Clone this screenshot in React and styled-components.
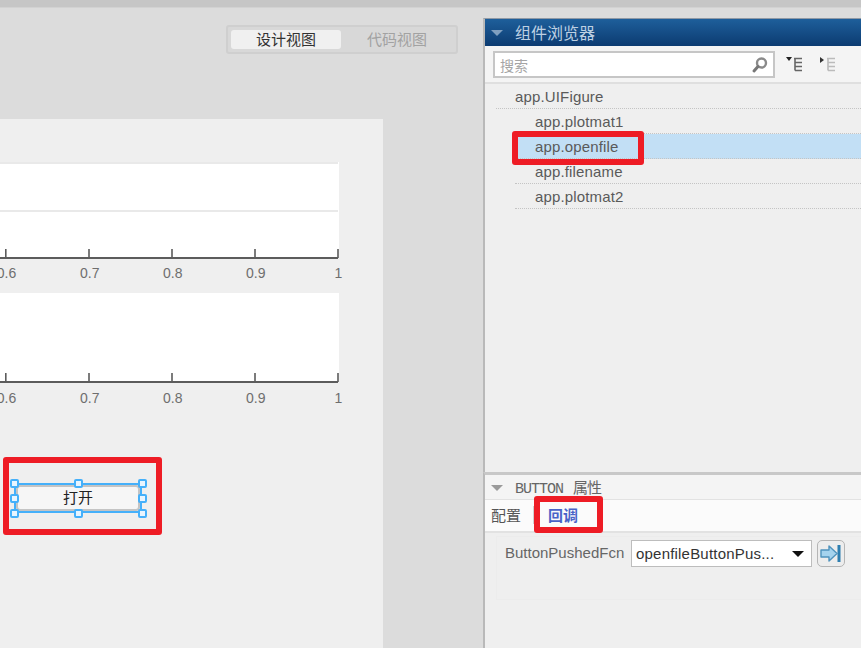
import React from 'react';
import styled, { createGlobalStyle } from 'styled-components';

const Global = createGlobalStyle`
  html, body { margin: 0; padding: 0; background: #dcdcdc; }
  body { width: 861px; height: 648px; overflow: hidden; font-family: "Liberation Sans", Arial, "Noto Sans CJK SC", sans-serif; }
  * { box-sizing: border-box; }
`;

const cjk = `"Noto Sans CJK SC", "Liberation Sans", sans-serif`;

const Page = styled.div`
  position: relative; width: 861px; height: 648px; display: flex; flex-direction: column; overflow: hidden; background: #dcdcdc;
`;
const TopBar = styled.div`height: 8px; flex: none; background: #c6c6c6; border-bottom: 1px solid #d2d2d2;`;
const Body = styled.div`flex: 1; display: flex; min-height: 0;`;

const Designer = styled.main`width: 483px; flex: none; display: flex; flex-direction: column;`;
const ToggleRow = styled.div`display: flex; justify-content: flex-end; padding: 17px 25px 0 0;`;
const Toggle = styled.div`
  width: 232px; height: 29px; display: flex; align-items: stretch; padding: 3px 3px;
  background: #d8d8d8; border: 2px solid #cfcfcf; border-radius: 3px;
`;
const ToggleItem = styled.div`
  flex: 0 0 ${p => (p.$active ? 110 : 112)}px; display: flex; align-items: center; justify-content: center;
  padding-bottom: 2px; font: 15px ${cjk}; border-radius: 3px;
  color: ${p => (p.$active ? '#333' : '#a2a2a2')};
  background: ${p => (p.$active ? '#f0f0f0' : 'transparent')};
`;
const Figure = styled.section`
  position: relative; width: 383px; flex: 1; margin-top: 65px; padding-top: 43px; background: #efefef;
`;
const AxesSvg = styled.svg`display: block; width: 350px; overflow: visible;`;
const TickLabel = styled.text`font: 14px "Liberation Sans", Arial, sans-serif; fill: #6e6e6e; text-anchor: middle;`;
const FirstAxes = styled.div`height: 131px;`;
const SecondAxes = styled.div`height: 125px;`;
const ButtonSlot = styled.div`position: relative; width: 128px; height: 30px; margin: 65px 0 0 14px; display: flex; padding: 2px 0;`;
const Selection = styled.div`position: absolute; inset: 0; border: 2px solid #45b0fa;`;
const DesignButton = styled.button`
  flex: 1; margin: 0 2px; padding: 0 0 3px; border: 2px solid #c4c4c4; border-radius: 4px; background: #f6f6f6;
  color: #222; font: 15px ${cjk}; line-height: 1;
`;
const Handle = styled.span`
  position: absolute; width: 9px; height: 9px; border: 2px solid #45b0fa; border-radius: 2px; background: #e8f5ff;
  left: ${p => p.$x - 4}px; top: ${p => p.$y - 4}px;
`;

const Side = styled.aside`flex: 1; display: flex; flex-direction: column; min-width: 0; padding-top: 10px;`;
const Browser = styled.section`
  flex: 0 0 454px; display: flex; flex-direction: column; border-left: 2px solid #b9b9b9; border-top: 1px solid #8f99a5; background: #efefef;
`;
const BlueHeader = styled.header`
  height: 27px; flex: none; display: flex; align-items: center; gap: 12px; padding: 0 0 2px 6px; color: #bdd0e3;
  background: linear-gradient(#1e5f9b, #0c3b71); font: 16px ${cjk};
`;
const Caret = styled.span`
  width: 0; height: 0; border-left: 6px solid transparent; border-right: 6px solid transparent;
  border-top: 6px solid ${p => p.$color}; flex: none; margin-top: 2px;
`;
const SearchRow = styled.div`
  height: 38px; flex: none; display: flex; align-items: center; padding: 0 0 0 8px; background: #f4f4f4; border-bottom: 2px solid #dfdfdf;
`;
const SearchBox = styled.div`
  width: 282px; height: 27px; display: flex; align-items: center; justify-content: space-between; padding: 1px 3px 0 5px;
  background: #fff; border: 2px solid #c6c6c6; color: #a5a5a5; font: 14px ${cjk};
`;
const ToolIcon = styled.svg`width: 20px; height: 16px; flex: none; margin-left: ${p => p.$gap}px;`;
const Tree = styled.ul`list-style: none; margin: 0; padding: 0; flex: 1; background: #efefef;`;
const TreeRow = styled.li`
  height: 25px; display: flex; align-items: center; font-size: 15px; letter-spacing: 0.15px; color: #5a5a5a;
  margin-left: ${p => (p.$root ? 11 : 30)}px;
  padding-left: ${p => (p.$root ? 19 : 20)}px;
  border-bottom: 1px dotted #c4c4c4;
  background: ${p => (p.$selected ? '#c2dff5' : 'transparent')};
`;

const Props = styled.section`
  flex: 1; display: flex; flex-direction: column; border-left: 2px solid #b9b9b9; border-top: 3px solid #c8c8c8; background: #efefef;
`;
const PropsHeader = styled.header`
  height: 25px; flex: none; display: flex; align-items: center; gap: 12px; padding: 0 0 1px 6px; background: #f4f4f4;
  border-bottom: 1px solid #e2e2e2; color: #666; font: 15px "Liberation Mono", ${cjk}; letter-spacing: -1px; word-spacing: 2px;
`;
const Tabs = styled.div`
  height: 33px; flex: none; display: flex; align-items: center; padding: 0 0 2px 6px; background: #fbfbfb; border-bottom: 2px solid #e2e2e2;
`;
const Tab = styled.div`
  font: ${p => (p.$active ? 700 : 400)} 15px ${cjk}; color: ${p => (p.$active ? '#4a63c8' : '#555')};
  padding: ${p => (p.$active ? '0 0 0 14px' : '0 12px 0 0')};
  ${p => (p.$active ? '' : 'border-right: 1px solid #d0d0d0; line-height: 18px;')}
`;
const CallbackArea = styled.div`
  margin: 3px 0 0 11px; height: 64px; padding: 3px 0 0 8px; display: flex; align-items: flex-start;
  border: 1px solid #ececec; border-right: none;
`;
const FieldLabel = styled.label`font-size: 15px; color: #666; width: 126px; flex: none; line-height: 26px;`;
const Select = styled.div`
  width: 181px; height: 27px; flex: none; display: flex; align-items: center; justify-content: space-between;
  padding: 0 7px 0 4px; background: #fff; border: 1px solid #bdbdbd; color: #333; font-size: 15px; letter-spacing: 0.2px;
`;
const SelectCaret = styled.span`width: 0; height: 0; border-left: 6px solid transparent; border-right: 6px solid transparent; border-top: 6px solid #111;`;
const JumpButton = styled.button`
  width: 28px; height: 27px; flex: none; margin-left: 5px; padding: 0; display: flex; align-items: center; justify-content: center;
  background: #ededed; border: 1px solid #b5b5b5; border-radius: 5px;
`;

const Annotation = styled.div`
  position: absolute; left: ${p => p.$x}px; top: ${p => p.$y}px; width: ${p => p.$w}px; height: ${p => p.$h}px;
  border: ${p => p.$t}px solid #ee1c25; border-radius: 3px; pointer-events: none;
`;

const ticks = [5.5, 88.7, 171.7, 254.7, 337.7];
const labels = ['0.6', '0.7', '0.8', '0.9', '1'];

function Axes({ height, plotTop, grid, labelGap }) {
  const axisY = height;
  return (
    <AxesSvg height={height + 28} viewBox={`0 0 350 ${height + 28}`}>
      <rect x="0" y={plotTop} width="339" height={height - plotTop} fill="#fff" />
      {grid.map(y => <rect key={y} x="0" y={y} width="338" height="2" fill="#e9e9e9" />)}
      <rect x="0" y={axisY - 1} width="338" height="2" fill="#5c5c5c" />
      {ticks.map(x => <rect key={x} x={x - 0.5} y={axisY - 9} width="1.6" height="9" fill="#5c5c5c" />)}
      {labels.map((t, i) => <TickLabel key={t} x={ticks[i] + (i === 4 ? 0.8 : 1)} y={axisY + labelGap}>{t}</TickLabel>)}
    </AxesSvg>
  );
}

const handles = [[0, 0], [64, 0], [128, 0], [0, 15], [128, 15], [0, 30], [64, 30], [128, 30]];

export default function App() {
  return (
    <Page>
      <Global />
      <TopBar />
      <Body>
        <Designer>
          <ToggleRow>
            <Toggle>
              <ToggleItem $active>设计视图</ToggleItem>
              <ToggleItem>代码视图</ToggleItem>
            </Toggle>
          </ToggleRow>
          <Figure>
            <FirstAxes><Axes height={96} plotTop={0} grid={[0, 48]} labelGap={20} /></FirstAxes>
            <SecondAxes><Axes height={89} plotTop={0} grid={[]} labelGap={21} /></SecondAxes>
            <ButtonSlot>
              <Selection />
              <DesignButton>打开</DesignButton>
              {handles.map(([x, y]) => <Handle key={`${x}-${y}`} $x={x} $y={y} />)}
            </ButtonSlot>
          </Figure>
        </Designer>
        <Side>
          <Browser>
            <BlueHeader><Caret $color="#7f9fc0" />组件浏览器</BlueHeader>
            <SearchRow>
              <SearchBox>
                搜索
                <svg width="20" height="20" viewBox="0 0 20 20">
                  <circle cx="11.5" cy="8" r="4.5" fill="#fff" stroke="#8a8a8a" strokeWidth="2.4" />
                  <path d="M8 11.5 L4 16" stroke="#777" strokeWidth="3" strokeLinecap="round" />
                </svg>
              </SearchBox>
              <ToolIcon $gap={10} viewBox="0 0 20 16">
                <path d="M1 1 h6 l-3 4z" fill="#222" />
                <path d="M9 2.5 h8 M10 2.5 v12 M10 6.5 h7 M10 10.5 h7 M10 14.5 h7" stroke="#666" strokeWidth="1.6" fill="none" />
              </ToolIcon>
              <ToolIcon $gap={13} viewBox="0 0 20 16">
                <path d="M2 1 l4 3 l-4 3z" fill="#333" />
                <path d="M9 2.5 h8 M10 2.5 v12 M10 6.5 h7 M10 10.5 h7 M10 14.5 h7" stroke="#bbb" strokeWidth="1.6" fill="none" />
              </ToolIcon>
            </SearchRow>
            <Tree>
              <TreeRow $root>app.UIFigure</TreeRow>
              <TreeRow>app.plotmat1</TreeRow>
              <TreeRow $selected>app.openfile</TreeRow>
              <TreeRow>app.filename</TreeRow>
              <TreeRow>app.plotmat2</TreeRow>
            </Tree>
          </Browser>
          <Props>
            <PropsHeader><Caret $color="#9a9a9a" /><span>BUTTON 属性</span></PropsHeader>
            <Tabs>
              <Tab>配置</Tab>
              <Tab $active>回调</Tab>
            </Tabs>
            <CallbackArea>
              <FieldLabel>ButtonPushedFcn</FieldLabel>
              <Select>openfileButtonPus...<SelectCaret /></Select>
              <JumpButton aria-label="go">
                <svg width="22" height="19" viewBox="0 0 22 19">
                  <path d="M1 6 h8 V2 l8 7.5 l-8 7.5 v-4 H1z" fill="#a5d3ee" stroke="#4f93bd" strokeWidth="1.4" strokeLinejoin="round" />
                  <rect x="17.5" y="1" width="3" height="17" fill="#2f7fb0" />
                </svg>
              </JumpButton>
            </CallbackArea>
          </Props>
        </Side>
      </Body>
      <Annotation $x={3} $y={457} $w={159} $h={78} $t={6} />
      <Annotation $x={512} $y={131} $w={132} $h={34} $t={6} />
      <Annotation $x={534} $y={496} $w={69} $h={37} $t={6} />
    </Page>
  );
}
